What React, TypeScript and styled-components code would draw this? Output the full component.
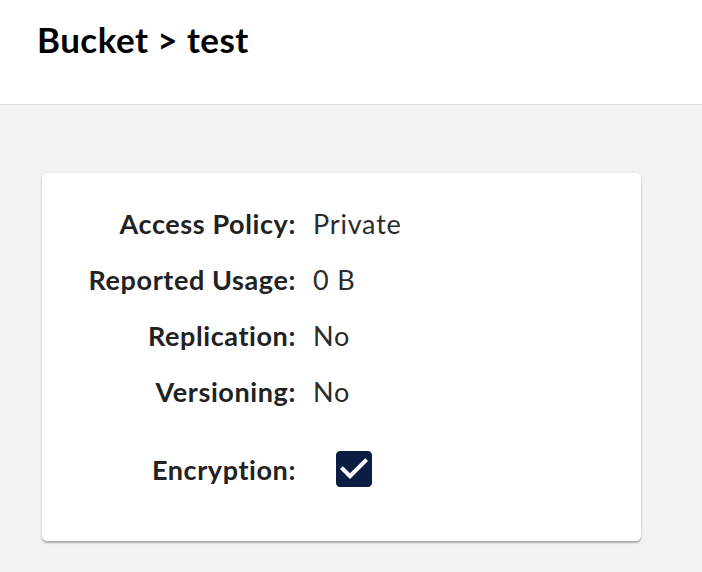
import styled, { createGlobalStyle } from 'styled-components';

const GlobalStyle = createGlobalStyle`
  html, body {
    margin: 0;
    padding: 0;
    background: #f2f2f2;
    font-family: Lato, 'Noto Sans', sans-serif;
  }
`;

const Page = styled.div`
  min-height: 572px;
  background: #f2f2f2;
`;

const Header = styled.header`
  height: 105px;
  background: #ffffff;
  border-bottom: 1px solid #dcdcdc;
  display: flex;
  align-items: flex-start;
  padding: 17px 0 0 37px;
  box-sizing: border-box;
`;

const Title = styled.h1`
  margin: 0;
  font-size: 35px;
  font-weight: 700;
  letter-spacing: 0.45px;
  color: #000000;
  line-height: 44px;
`;

const Content = styled.main`
  padding: 68px 0 0 42px;
`;

const Card = styled.section`
  width: 599px;
  box-sizing: border-box;
  background: #ffffff;
  border-radius: 5px;
  box-shadow: 0 2px 2px rgba(0, 0, 0, 0.28), 0 0 3px rgba(0, 0, 0, 0.06);
  padding: 22px 0 36px 0;
`;

const Row = styled.div<{ $tall?: boolean }>`
  display: grid;
  grid-template-columns: 254px auto;
  column-gap: 17px;
  align-items: center;
  height: ${(p) => (p.$tall ? '72px' : '56px')};
  margin-top: ${(p) => (p.$tall ? '14px' : '0')};
`;

const Label = styled.div`
  text-align: right;
  font-size: 27px;
  font-weight: 700;
  letter-spacing: 0.6px;
  color: #222222;
`;

const Value = styled.div`
  font-size: 27px;
  font-weight: 400;
  letter-spacing: 0.8px;
  color: #2b2b2b;
`;

const CheckBox = styled.svg`
  display: block;
  width: 36px;
  height: 36px;
  margin-left: 23px;
`;

const details = [
  { label: 'Access Policy:', value: 'Private' },
  { label: 'Reported Usage:', value: '0 B' },
  { label: 'Replication:', value: 'No' },
  { label: 'Versioning:', value: 'No' },
];

export default function App() {
  return (
    <Page>
      <GlobalStyle />
      <Header>
        <Title>Bucket &gt; test</Title>
      </Header>
      <Content>
        <Card>
          {details.map((d) => (
            <Row key={d.label}>
              <Label>{d.label}</Label>
              <Value>{d.value}</Value>
            </Row>
          ))}
          <Row $tall>
            <Label>Encryption:</Label>
            <CheckBox viewBox="3 3 18 18">
              <path
                fill="#0c1d43"
                d="M19 3H5c-1.11 0-2 .9-2 2v14c0 1.1.89 2 2 2h14c1.11 0 2-.9 2-2V5c0-1.1-.89-2-2-2zm-9 14l-5-5 1.41-1.41L10 14.17l7.59-7.59L19 8l-9 9z"
              />
            </CheckBox>
          </Row>
        </Card>
      </Content>
    </Page>
  );
}
